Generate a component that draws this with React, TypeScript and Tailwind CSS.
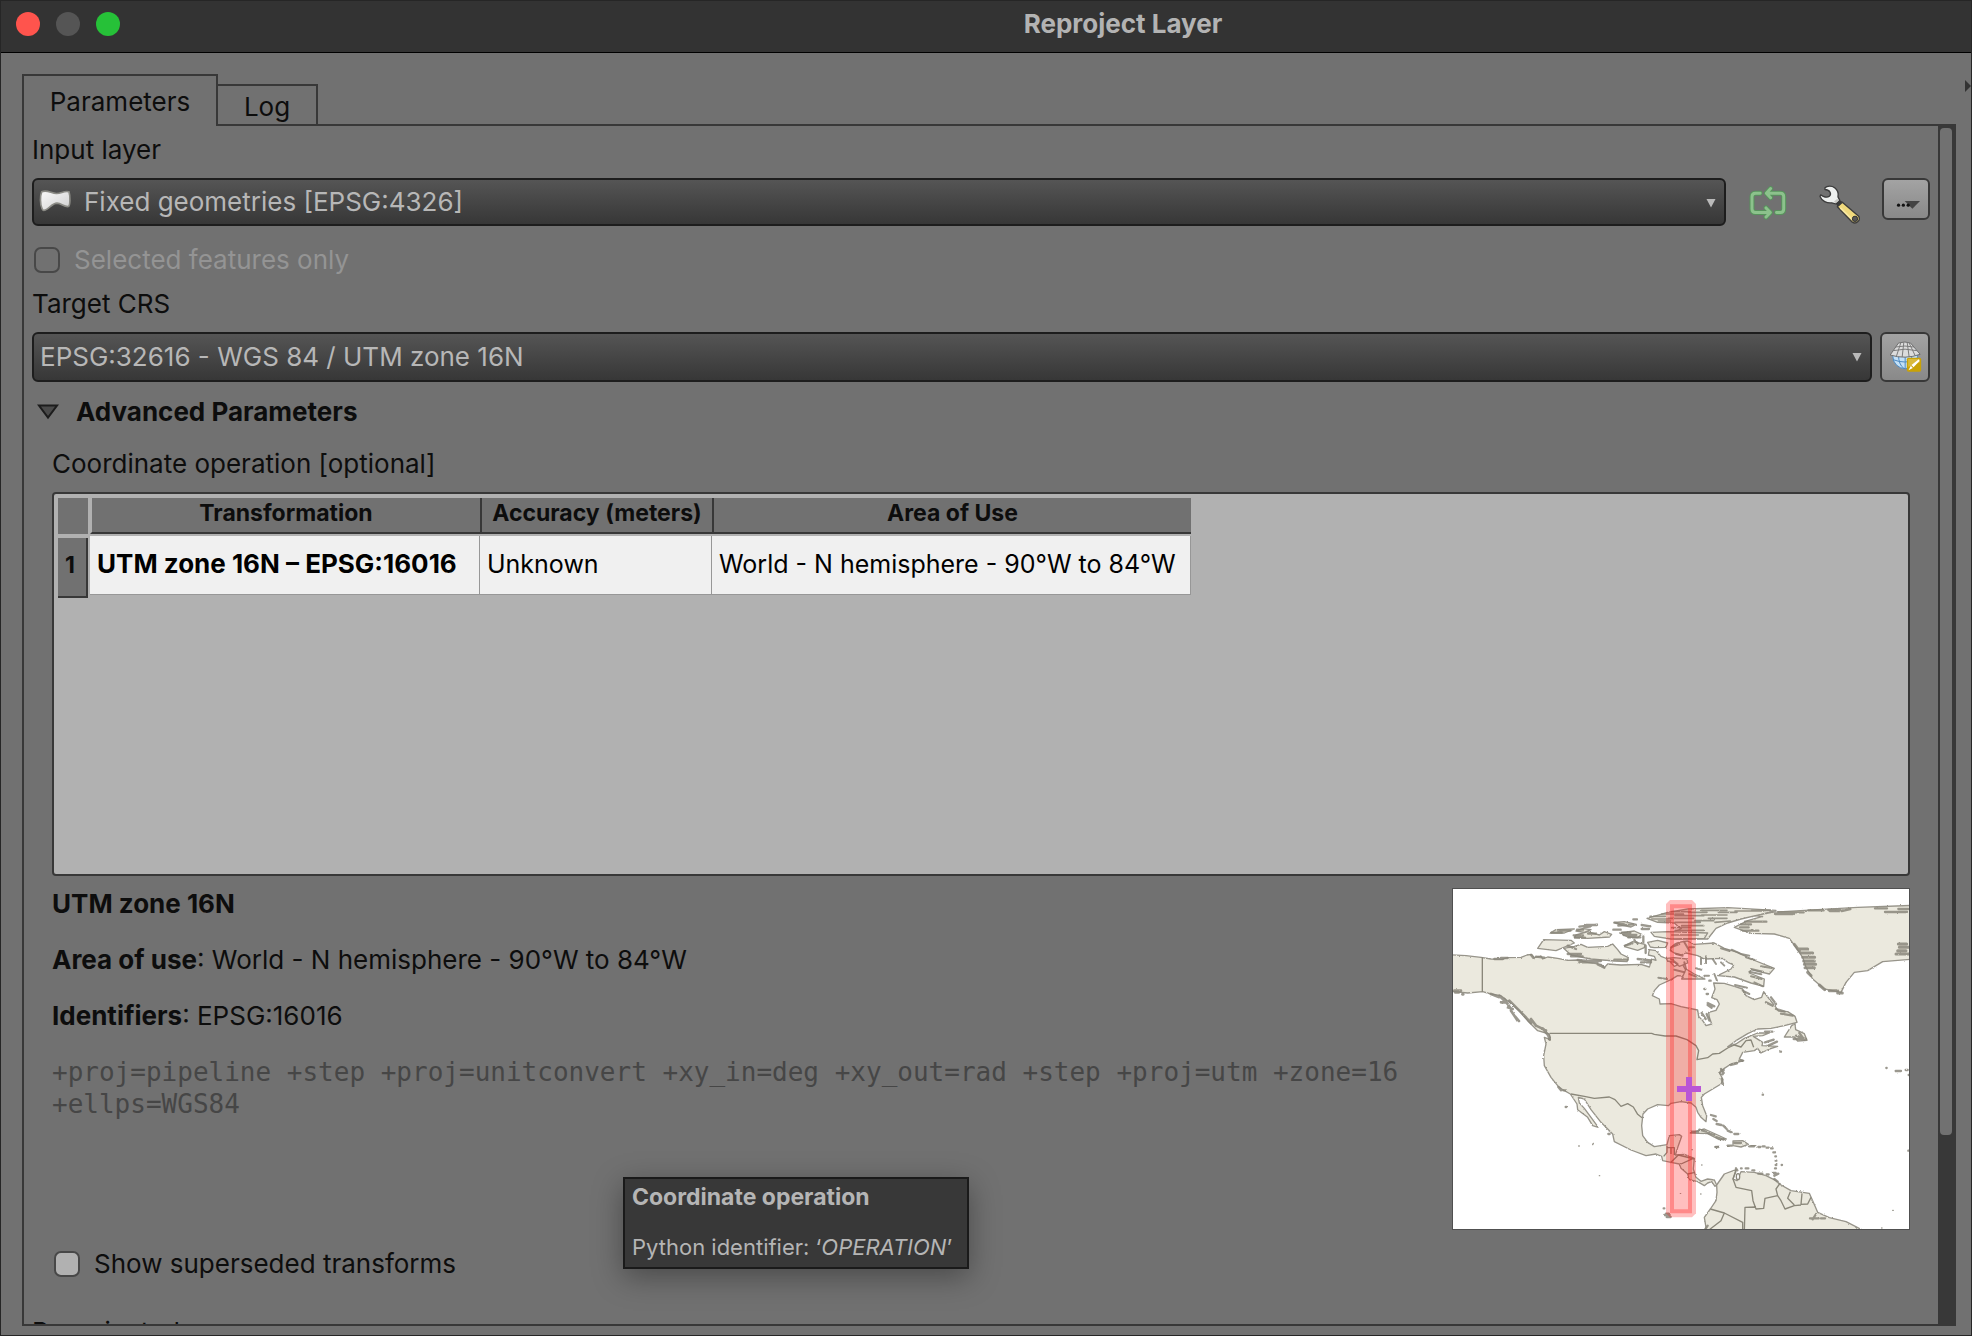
import type { ReactNode } from "react";

function Arrow({ className }: { className?: string }) {
  return (
    <svg viewBox="0 0 10 10" className={"pointer-events-none absolute size-[10px] " + (className ?? "")} aria-hidden="true">
      <path d="M0.5 1h9L5 9.5z" fill="#b9b9b9" />
    </svg>
  );
}

function PolygonIcon() {
  return (
    <svg viewBox="0 0 96 68" className="pointer-events-none absolute left-[7px] top-[11px] h-[23px] w-8" aria-hidden="true">
      <defs>
        <linearGradient id="poly" x1="0" y1="0" x2="1" y2="1">
          <stop offset="0" stopColor="#fafafa" />
          <stop offset="1" stopColor="#cfcfcf" />
        </linearGradient>
      </defs>
      <path
        d="M8 8C3 20 3 45 9 58C11 65 16 65 24 60C34 54 42 42 54 42C68 43 76 54 88 52C94 50 94 20 90 8C76 3 66 14 52 13C36 12 24 1 8 8Z"
        fill="url(#poly)"
        stroke="#8b8b85"
        strokeWidth="5"
        strokeLinejoin="round"
      />
    </svg>
  );
}

function IterateIcon() {
  const d =
    "M26 20H12Q1 20 1 31V68Q1 79 12 79H56M44 65L57 79L44 93M46 20H88Q98 20 98 30V68Q98 79 88 79H76M58 6L45 20L58 34";
  return (
    <svg viewBox="-8 -2 116 104" className="h-[34px] w-[38px]" fill="none" aria-hidden="true">
      <path d={d} stroke="#4f9f56" strokeWidth="15" strokeLinejoin="round" strokeLinecap="round" opacity="0.75" />
      <path d={d} stroke="#8cc28c" strokeWidth="9" strokeLinejoin="round" strokeLinecap="round" />
    </svg>
  );
}

function WrenchIcon() {
  return (
    <svg viewBox="238 40 126 122" className="h-[41px] w-[42px]" aria-hidden="true">
      <path
        d="M256 51C262 45 276 44 285 51C294 58 297 68 295 78L300 88L288 99L276 96C262 98 246 90 241 77L243 72C250 78 262 82 269 76C276 70 272 57 256 56Z"
        fill="#eef0ef"
        stroke="#3c3c3c"
        strokeWidth="4"
        strokeLinejoin="round"
      />
      <path d="M283 92L293 84L298 89L289 99Z" fill="#c9c9c5" />
      <path d="M288 98L301 88L311 95L296 110Z" fill="#3a3a3a" />
      <path d="M293 108L308 94L357 136Q362 146 355 152Q347 160 338 154Z" fill="#f0d97c" stroke="#3c3c3c" strokeWidth="4" strokeLinejoin="round" />
      <path d="M302 111L338 146" stroke="#f8e9a4" strokeWidth="5" />
      <circle cx="346" cy="144" r="8" fill="#555" stroke="#333" strokeWidth="3" />
    </svg>
  );
}

function CrsIcon() {
  return (
    <svg viewBox="684 844 98 96" className="h-8 w-[33px]" aria-hidden="true">
      <circle cx="732" cy="890" r="37" fill="#c3e0f7" stroke="#4c8ac4" strokeWidth="3" />
      <path d="M696 900Q730 914 768 900M712 885Q712 915 728 926M732 885V926M752 885Q752 910 742 922" fill="none" stroke="#4c8ac4" strokeWidth="3" />
      <path d="M712 850Q732 844 748 850L777 884Q732 900 687 886Z" fill="#dcdcdc" stroke="#6f6f6f" strokeWidth="3" />
      <path
        d="M703 862Q732 856 758 862M695 873Q732 864 768 873M719 849L706 889M728 848L723 892M738 848L744 892M744 850L762 888"
        fill="none"
        stroke="#7b7b7b"
        strokeWidth="3"
      />
      <rect x="737" y="894" width="43" height="42" rx="5" fill="#c9a206" />
      <path d="M741 898H776V908L741 922Z" fill="#d9b93c" />
      <path d="M773 899L775 904L757 923L751 916ZM749 918L755 925L742 932Z" fill="#fff" />
    </svg>
  );
}

function ExtentMap() {
  const land = "#ebe9de";
  const edge = "#97948a";
  return (
    <svg viewBox="36 30 1368 1020" preserveAspectRatio="xMidYMid slice" className="block h-[340px] w-[456px] bg-white" role="img" aria-label="Area of use map">
      <defs>
        <filter id="rough" x="-5%" y="-5%" width="110%" height="110%">
          <feTurbulence type="fractalNoise" baseFrequency="0.16" numOctaves="2" seed="4" />
          <feDisplacementMap in="SourceGraphic" scale="6" xChannelSelector="R" yChannelSelector="G" />
        </filter>
      </defs>
      <g fill={land} stroke={edge} strokeWidth="4" strokeLinejoin="round" filter="url(#rough)">
        <path d="M20 227L75 230L120 235L150 240L182 241L200 236L240 235L258 228L272 226L280 236L300 231L305 240L320 234L350 238L380 244L410 243L440 250L480 256L490 266L500 255L540 258L600 256L625 264L632 240L645 244L640 232L622 228L625 212L645 215L660 232L680 240L700 262L722 252L735 275L742 292L710 290L690 302L655 318L640 335L634 350L655 360L657 375L690 374L720 383L770 393L773 412L785 425L795 440L812 435L805 415L803 400L825 394L835 375L828 362L812 356L822 330L818 312L850 313L880 322L905 330L915 350L940 362L962 355L968 338L985 360L1005 385L1012 396L1040 398L1062 412L1068 430L1030 440L990 448L950 450L920 464L885 485L860 503L885 495L910 478L950 462L985 462L965 470L937 472L965 490L963 500L1010 502L985 510L960 522L950 508L940 515L905 520L895 540L908 545L870 555L850 568L836 582L846 602L840 615L815 630L790 645L781 655L785 680L797 710L795 728L780 715L770 700L765 685L750 672L720 668L690 673L682 680L650 677L620 690L606 705L602 740L605 770L620 790L640 803L678 797L685 770L715 767L722 772L712 800L703 828L730 826L760 838L757 870L765 895L780 907L800 900L820 903L827 918L822 922L812 908L800 912L790 920L770 908L745 902L740 885L720 868L715 855L690 850L665 845L662 832L645 825L615 830L570 813L520 788L515 765L480 730L450 692L430 660L412 655L415 672L430 688L450 715L472 745L455 740L440 715L410 692L408 675L388 645L365 632L350 620L330 595L310 560L308 530L315 495L310 475L328 482L325 465L290 455L260 425L235 395L205 370L180 350L150 345L125 338L80 342L20 336Z" />
        <path d="M827 918L850 885L885 872L884 880L876 900L888 905L900 878L940 880L975 890L1005 905L1015 915L1050 935L1105 943L1115 965L1130 1000L1165 1016L1215 1028L1270 1056L1270 1080L785 1080L795 1045L790 1015L808 990L825 965L828 940Z" />
        <path d="M880 145L920 125L965 112L935 110L1000 99L1040 97L1130 92L1250 85L1420 79V240L1325 248L1280 275L1240 280L1215 310L1200 340L1150 330L1115 300L1095 265L1085 235L1065 205L1045 178L1000 165L930 163Z" />
        <path d="M618 118L680 100L740 90L860 86L1005 94L960 106L900 120L860 132L825 148L800 180L700 180L680 165L720 150L700 132L650 130Z" />
        <path d="M688 215Q690 190 740 186L760 196L820 192L850 208L890 220L930 240L1000 268L985 285L930 272L925 282L970 300L968 322L930 312L880 294L830 290L870 270L878 258L860 250L845 238L790 240L770 230L735 222L720 228L700 222Z" />
        <path d="M368 208L400 202L420 196L440 205L500 202L515 195L530 212L540 225L562 236L558 248L520 246L450 240L390 228Z" />
        <path d="M290 208L308 182L390 184L400 192L345 215Z" />
        <path d="M548 202L575 188L612 196L610 206L590 214Z" />
        <path d="M405 168L440 158L475 168L490 158L512 166L505 174L440 178L400 175Z" />
        <path d="M327 162L345 152L400 150L370 162Z" />
        <path d="M620 190L650 184L680 192L675 205L640 206L628 204Z" />
        <path d="M630 160L680 158L800 162L790 178L690 180L640 172Z" />
        <path d="M520 130L550 128L586 136L570 144L540 138Z" />
        <path d="M536 162L580 156L602 166L590 176L560 174Z" />
        <path d="M405 156L425 149L450 152L430 160Z" />
        <path d="M676 238L700 236L738 240L740 252L715 262L700 250L680 246Z" />
        <path d="M722 300L735 270L760 285L792 300L740 300Z" />
        <path d="M1030 474L1052 440L1062 434L1064 452L1090 464L1098 484L1070 486L1060 474Z" />
        <path d="M748 762L790 750L830 768L856 780L835 782L800 764Z" />
        <path d="M876 786L905 785L922 796L900 804L876 800Z" />
        <path d="M820 804L836 802M856 802h10M928 800h18" />
      </g>
      <g stroke="#8a877b" strokeWidth="7" fill="none" opacity="0.85" strokeLinecap="round" filter="url(#rough)">
        <path d="M332 161h30M352 155h36M415 143l52 -6M432 138h36M430 145l20 -3M408 152h18M398 169h28M442 164h22M402 176h30M520 131l30 5M532 140l44 -4M577 121h11M517 152h22M542 161h26M548 168h38M562 175h36M602 138l26 4M602 150h22M580 183l10 10M607 172v18M614 200v22M552 200l22 -7" />
        <path d="M627 112h46M632 120h54M652 126h36M662 105h66M682 118h76M692 98h56M702 110h86M702 130h76M722 140h66M692 146h56M702 154h86M742 100h56M762 125h56M782 108h76M802 118h56M822 130l46 -4M832 100h56M782 94h76M882 96h86M692 168h80M932 94h56" strokeWidth="5" />
        <path d="M900 136h30M912 128h64M897 145h26M902 155h50M1002 105h54M1012 100h76M1102 94h46M1162 93h36M1166 96h28M1202 96l26 -6M1302 88h36M1332 99h66M1372 90h30" />
        <path d="M1060 196l15 20M1070 210h30M1080 222h35M1085 235h36M1088 246h32M1090 256h34M1092 266h28M1100 280l10 10M1135 318l16 14M1165 335h25M1190 342h14M1375 205h30M1370 215h25M1365 225h40M1372 195h25" strokeWidth="9" />
        <path d="M380 200l25 10M380 225h40M390 232h35M410 243l60 6M415 250h40M470 256l20 10M440 246h40M590 240l40 4M600 250h30M520 242h40M160 240h26M180 237h20M270 228l8 10M285 233l25 3" />
        <path d="M690 205l25 -10M730 190l15 25M705 225l20 5M745 205h14M690 240l20 15M730 250l5 20M700 272l30 8M745 285l20 8M780 238v18M795 232v20M815 240l10 15M840 250l10 10M840 208l26 8M872 212l26 12M900 225l25 5M915 235l26 8M930 270l36 8M960 262l32 5M925 278l36 8M930 292l32 8M820 285l8 20M790 290h14M765 268l16 4M652 296l26 4M882 318l36 8M905 335l20 10M940 310l26 12" strokeWidth="6" />
        <path d="M797 345h4M790 330h3M805 305h4M800 372l20 10M805 380h8M800 378l12 8M782 402l12 18M797 405l8 20" />
        <path d="M40 335h20M42 340h12M64 346h3M150 345l25 10M175 350l25 25M190 360l20 30M205 365l30 30M225 385l30 30M240 400l30 32M210 395l20 30M270 420l15 20M285 440l30 14M305 448l20 25M322 470l4 12M180 370h15M200 385l15 5M222 412l12 14" strokeWidth="8" />
        <path d="M975 370l20 10M990 355l15 20M1005 390l26 8M1020 404l35 6M1065 470l30 10M1058 480h36M1075 462l15 20M972 458h22M972 490l26 -8M982 500l26 -12M1018 518h2M895 545h10M870 558l18 -5M840 570l8 12M835 582l10 4M842 600l4 15M838 575l10 -2" />
        <path d="M810 708l14 4M817 720l10 6M827 735l14 3M847 740l10 10M860 755l12 5M880 765h12M750 758h20M775 752l20 6M800 762l20 6M826 774l22 8M824 804h8M860 800h12M880 792h20M925 802h14M952 804h6M965 802h6M977 806h6M990 808h5M997 820h5M1003 832h2M1004 845h2M1004 858h2M1022 858h1M1002 868h3M996 882h8M1000 890l12 -6M885 868l4 6M900 868h2M914 868h8M934 874h6M952 884h12M977 886h6M1000 900l10 8" />
        <path d="M965 647h1M1336 567h1M1364 576h16M1394 573h6M1403 588h2M1402 815h2M374 684h2M502 765h4M668 988h2M670 1008h16M677 1014h12M675 1004h8M352 624l8 10M367 634h8" />
        <path d="M413 801h2M457 793l-2 4M475 890h1M718 943h1M779 945h1M1355 994h2M1322 1047h1M753 812h1M782 858h1" strokeWidth="4" />
        <path d="M1107 1018h26M1125 1005l-10 16M1140 1018h12M800 1040l-8 12" />
      </g>
      <g stroke="#8a877a" strokeWidth="4" fill="none" strokeLinejoin="round">
        <path d="M124 235V338M326 463H632L640 466L672 471L705 471L738 482L765 500L773 515L768 542L800 536L815 525L835 523L860 507L880 498L900 504L915 485L930 483L938 505" />
        <path d="M390 645L430 652L460 658L505 654L522 662L540 682L560 674L577 684L590 706L603 716" />
        <path d="M678 800L678 820L668 832M690 806L690 825M678 806H700V828M690 850L712 828L760 840M720 855L757 838M740 885L762 880" />
        <path d="M885 872L876 900L885 925L932 935L936 965L945 990L968 988L972 958L1010 950L1005 930L1018 912M910 1056L912 985L945 984M1010 950L1020 965L1032 990L1060 980L1080 978M1048 938L1040 958L1060 978M1083 943L1080 976L1100 975L1110 955M808 990L850 1002L840 1025L800 1056M850 1002L905 1030V1056" />
        <ellipse cx="891" cy="893" rx="5" ry="9" fill="#fff" />
      </g>
      <g>
        <path d="M687 63H753L765 75V1003L753 1015H687L675 1003V75Z" fill="#ff0000" opacity="0.25" />
        <path d="M687 76H753V1003H687ZM699 88V991H741V88Z" fill="#ff2020" fillRule="evenodd" opacity="0.34" />
      </g>
      <path d="M735 594H753V621H780V639H753V666H735V639H708V621H735Z" fill="#b955d6" />
    </svg>
  );
}

function Head({ children, className }: { children: ReactNode; className: string }) {
  return (
    <th scope="col" className={"h-9 border-b-2 border-b-[#383838] border-l-2 bg-[#717171] p-0 pb-1 text-[23px] leading-[30px] font-bold " + className}>
      {children}
    </th>
  );
}

function Cell({ children, className }: { children: ReactNode; className: string }) {
  return (
    <td className="p-0 pt-[2px] align-top">
      <div className={"flex h-[59px] items-center border-r border-b border-[#979797] bg-[#f0f0f0] pb-[2px] pl-[7px] whitespace-nowrap text-black " + className}>
        {children}
      </div>
    </td>
  );
}

const selectClass =
  "block w-full appearance-none rounded-[6px] border-2 border-[#1d1d1d] bg-linear-to-b from-[#555555] to-[#373737] text-[#b7b7b7] outline-none";

export default function App() {
  return (
    <div className="flex h-screen flex-col overflow-hidden border border-[#262626] bg-[#717171] font-[Inter,'Liberation_Sans',sans-serif] text-[26px] leading-8 text-[#0d0d0d]">
      <header className="relative flex h-13 shrink-0 items-center border-b border-black bg-[#333333] pb-[6px]">
        <div className="absolute left-[15px] flex gap-4">
          <button aria-label="Close" className="size-6 rounded-full bg-[#ff544d]" />
          <button aria-label="Minimize" className="size-6 rounded-full bg-[#555555]" />
          <button aria-label="Zoom" className="size-6 rounded-full bg-[#26c138]" />
        </div>
        <h1 className="w-full pl-[274px] text-center font-bold text-[#b3b3b3]">Reproject Layer</h1>
      </header>

      <main className="relative flex min-h-0 flex-1 flex-col pt-[21px] pr-[15px] pb-[9px] pl-[21px]">
        <button aria-label="Show help" className="absolute top-[27px] right-0 h-3 w-[6px]">
          <svg viewBox="0 0 6 12" className="h-3 w-[6px]" aria-hidden="true">
            <path d="M0 0L6 6L0 12Z" fill="#333" />
          </svg>
        </button>
        <div role="tablist" className="flex shrink-0 items-end">
          <button role="tab" aria-selected="true" className="relative z-10 -mb-[2px] h-13 w-[196px] border-2 border-b-0 border-[#383838] bg-[#717171] pt-0.5">
            Parameters
          </button>
          <button role="tab" aria-selected="false" className="-ml-[2px] h-10 w-[102px] border-2 border-b-0 border-[#383838] pt-1">
            Log
          </button>
        </div>

        <div role="tabpanel" className="flex min-h-0 flex-1 border-2 border-[#383838]">
          <div className="flex min-w-0 flex-1 flex-col overflow-hidden px-2 pt-2">
            <label htmlFor="layer" className="shrink-0">Input layer</label>
            <div className="mt-3 flex shrink-0 items-start">
              <div className="relative flex-1">
                <select id="layer" className={selectClass + " h-12 pl-[50px]"}>
                  <option>Fixed geometries [EPSG:4326]</option>
                </select>
                <PolygonIcon />
                <Arrow className="top-5 right-[10px]" />
              </div>
              <button aria-label="Iterate over this layer" className="ml-[23px] mt-2">
                <IterateIcon />
              </button>
              <button aria-label="Advanced options" className="ml-8 mt-[6px]">
                <WrenchIcon />
              </button>
              <button
                aria-label="Browse for layer"
                className="ml-[21px] flex h-[42px] w-12 items-end justify-center rounded-[6px] border-2 border-[#383838] bg-linear-to-b from-[#a3a3a3] to-[#898989] pb-[9px] pl-1"
              >
                <svg viewBox="714 420 76 28" className="h-[9px] w-[25px]" aria-hidden="true">
                  <path d="M740 423H788L764 447Z" fill="#444" />
                  <g fill="#111">
                    <circle cx="721" cy="436" r="5" />
                    <circle cx="736" cy="436" r="5" />
                    <circle cx="751" cy="436" r="5" />
                  </g>
                </svg>
              </button>
            </div>

            <label className="mt-[18px] flex shrink-0 items-center gap-[14px] pl-0.5 text-[#949494]">
              <input type="checkbox" disabled className="size-[26px] appearance-none rounded-[7px] border-2 border-[#484848]" />
              Selected features only
            </label>

            <label htmlFor="crs" className="mt-3 shrink-0">Target CRS</label>
            <div className="mt-3 flex shrink-0 gap-2">
              <div className="relative flex-1">
                <select id="crs" className={selectClass + " h-[50px] pl-[6px]"}>
                  <option>EPSG:32616 - WGS 84 / UTM zone 16N</option>
                </select>
                <Arrow className="top-5 right-[10px]" />
              </div>
              <button
                aria-label="Select CRS"
                className="flex h-[50px] w-[50px] items-center justify-center rounded-[6px] border-2 border-[#383838] bg-linear-to-b from-[#a3a3a3] to-[#898989]"
              >
                <CrsIcon />
              </button>
            </div>

            <button className="mt-[14px] flex shrink-0 items-center gap-[17px] pl-[5px] text-left font-bold">
              <svg viewBox="0 0 22 16" className="h-4 w-[22px]" aria-hidden="true">
                <path d="M2 1.5H20L11 13.5Z" fill="#4a4a4a" stroke="#1c1c1c" strokeWidth="2" />
              </svg>
              Advanced Parameters
            </button>

            <section className="mt-5 flex shrink-0 flex-col pr-5 pl-5">
              <h2>Coordinate operation [optional]</h2>
              <div className="mt-3 h-[384px] rounded-[4px] border-2 border-[#383838] bg-[#b1b1b1] p-1">
                <table className="table-fixed border-separate border-spacing-0">
                  <colgroup>
                    <col className="w-8" />
                    <col className="w-[390px]" />
                    <col className="w-[232px]" />
                    <col className="w-[479px]" />
                  </colgroup>
                  <thead>
                    <tr>
                      <td className="border-r-2 border-[#b1b1b1] bg-[#717171] p-0" />
                      <Head className="border-l-[#b1b1b1]">Transformation</Head>
                      <Head className="border-l-[#383838]">Accuracy (meters)</Head>
                      <Head className="border-l-[#383838]">Area of Use</Head>
                    </tr>
                  </thead>
                  <tbody>
                    <tr>
                      <th scope="row" className="p-0 pt-1 pr-[2px] align-top">
                        <div className="flex h-[60px] items-center justify-center border-r-2 border-b-2 border-[#383838] bg-[#717171] pr-1 pb-1 text-[23px] font-bold">1</div>
                      </th>
                      <Cell className="font-bold">UTM zone 16N – EPSG:16016</Cell>
                      <Cell className="text-[25px]">Unknown</Cell>
                      <Cell className="text-[25px]">World - N hemisphere - 90°W to 84°W</Cell>
                    </tr>
                  </tbody>
                </table>
              </div>

              <div className="mt-3 flex items-start justify-between">
                <div className="flex max-w-[1380px] min-w-0 flex-1 flex-col gap-6">
                  <h3 className="font-bold">UTM zone 16N</h3>
                  <p><strong className="font-bold">Area of use</strong>: World - N hemisphere - 90°W to 84°W</p>
                  <p><strong className="font-bold">Identifiers</strong>: EPSG:16016</p>
                  <p className="font-['DejaVu_Sans_Mono',monospace] text-[#464646]">
                    +proj=pipeline +step +proj=unitconvert +xy_in=deg +xy_out=rad +step +proj=utm +zone=16 +ellps=WGS84
                  </p>
                </div>
                <div className="border border-[#505050]">
                  <ExtentMap />
                </div>
              </div>

              <label className="mt-[18px] flex items-center gap-[14px] pl-0.5">
                <input type="checkbox" className="size-[26px] appearance-none rounded-[7px] border-2 border-[#484848] bg-[#b1b1b1]" />
                Show superseded transforms
              </label>
            </section>

            <label className="mt-9 shrink-0">Reprojected</label>
          </div>

          <div className="w-4 shrink-0 bg-[#383838]">
            <div className="h-[84.4%] rounded-[6px] border-2 border-[#383838] bg-[#717171]" />
          </div>
        </div>
      </main>

      <div
        role="tooltip"
        className="absolute top-[1177px] left-[623px] flex h-[92px] w-[346px] flex-col justify-between border-2 border-[#1a1a1a] bg-[#383838] px-[7px] pt-[3px] pb-[5px] text-[22px] leading-[30px] whitespace-nowrap text-[#b5b5b5] shadow-[0_8px_28px_rgba(0,0,0,0.35)]"
      >
        <strong className="text-[23px] font-bold">Coordinate operation</strong>
        <span>Python identifier: ‘<em>OPERATION</em>’</span>
      </div>
    </div>
  );
}
